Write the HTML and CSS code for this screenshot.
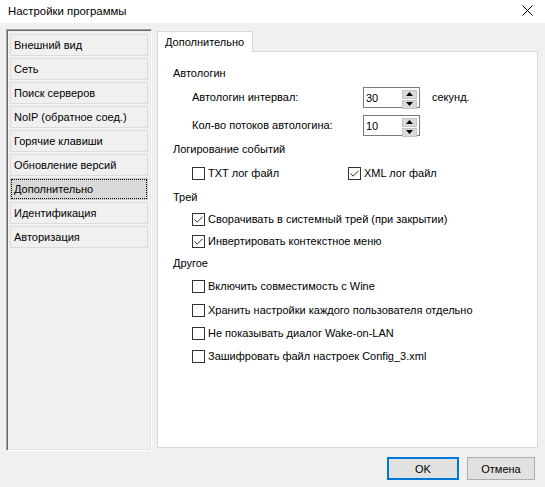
FILE: index.html
```html
<!DOCTYPE html>
<html lang="ru">
<head>
<meta charset="utf-8">
<title>Настройки программы</title>
<link rel="stylesheet" href="styles.css">
</head>
<body>
<div class="window">
  <div class="titlebar">
    <span class="title">Настройки программы</span>
    <svg class="close" width="11" height="11" viewBox="0 0 11 11"><path d="M0.5 0.5 L10.5 10.5 M10.5 0.5 L0.5 10.5" stroke="#000" stroke-width="1" fill="none"/></svg>
  </div>
  <div class="content">
    <div class="sidebar">
      <div class="nav-item">Внешний вид</div>
      <div class="nav-item">Сеть</div>
      <div class="nav-item">Поиск серверов</div>
      <div class="nav-item">NoIP (обратное соед.)</div>
      <div class="nav-item">Горячие клавиши</div>
      <div class="nav-item">Обновление версий</div>
      <div class="nav-item selected">Дополнительно</div>
      <div class="nav-item">Идентификация</div>
      <div class="nav-item">Авторизация</div>
    </div>
    <div class="tabs">
      <div class="tab-strip"><div class="tab">Дополнительно</div></div>
      <div class="tab-panel">
        <div class="row group">Автологин</div>
        <div class="row sub gap2">
          <span class="field-label">Автологин интервал:</span>
          <span class="spin"><span class="spin-val">30</span><span class="spin-btns"><span class="spin-btn"><svg width="7" height="4" viewBox="0 0 7 4"><path d="M0 4 L3.5 0 L7 4 Z" fill="#000"/></svg></span><span class="spin-btn"><svg width="7" height="4" viewBox="0 0 7 4"><path d="M0 0 L7 0 L3.5 4 Z" fill="#000"/></svg></span></span></span>
          <span class="unit">секунд.</span>
        </div>
        <div class="row sub gap6">
          <span class="field-label">Кол-во потоков автологина:</span>
          <span class="spin"><span class="spin-val">10</span><span class="spin-btns"><span class="spin-btn"><svg width="7" height="4" viewBox="0 0 7 4"><path d="M0 4 L3.5 0 L7 4 Z" fill="#000"/></svg></span><span class="spin-btn"><svg width="7" height="4" viewBox="0 0 7 4"><path d="M0 0 L7 0 L3.5 4 Z" fill="#000"/></svg></span></span></span>
        </div>
        <div class="row group gap2">Логирование событий</div>
        <div class="row sub gap2">
          <label class="check first-col"><span class="box"></span>TXT лог файл</label>
          <label class="check"><span class="box"><svg width="11" height="11" viewBox="0 0 11 11"><path d="M1.5 5.5 L4.2 8.2 L9.5 2.8" stroke="#333" stroke-width="1" fill="none"/></svg></span>XML лог файл</label>
        </div>
        <div class="row group gap2">Трей</div>
        <div class="row sub">
          <label class="check"><span class="box"><svg width="11" height="11" viewBox="0 0 11 11"><path d="M1.5 5.5 L4.2 8.2 L9.5 2.8" stroke="#333" stroke-width="1" fill="none"/></svg></span>Сворачивать в системный трей (при закрытии)</label>
        </div>
        <div class="row sub">
          <label class="check"><span class="box"><svg width="11" height="11" viewBox="0 0 11 11"><path d="M1.5 5.5 L4.2 8.2 L9.5 2.8" stroke="#333" stroke-width="1" fill="none"/></svg></span>Инвертировать контекстное меню</label>
        </div>
        <div class="row group">Другое</div>
        <div class="row sub gap1">
          <label class="check"><span class="box"></span>Включить совместимость с Wine</label>
        </div>
        <div class="row sub gap2">
          <label class="check"><span class="box"></span>Хранить настройки каждого пользователя отдельно</label>
        </div>
        <div class="row sub gap1">
          <label class="check"><span class="box"></span>Не показывать диалог Wake-on-LAN</label>
        </div>
        <div class="row sub gap1">
          <label class="check"><span class="box"></span>Зашифровать файл настроек Config_3.xml</label>
        </div>
      </div>
    </div>
  </div>
  <div class="footer">
    <button class="btn btn-default">OK</button>
    <button class="btn btn-cancel">Отмена</button>
  </div>
</div>
</body>
</html>
```
FILE: styles.css
```css
html, body {
  margin: 0;
  padding: 0;
}
body {
  background: #f0f0f0;
  font-family: "Liberation Sans", Arial, sans-serif;
  font-size: 11px;
  color: #000;
}
.window {
  width: 545px;
  height: 487px;
  display: flex;
  flex-direction: column;
}
.titlebar {
  height: 23px;
  background: #fff;
  display: flex;
  align-items: center;
  justify-content: space-between;
  padding: 0 12px 2px 8px;
  box-sizing: border-box;
}
.title {
  font-size: 11.4px;
}
.close {
  display: block;
}
.content {
  display: flex;
  padding: 6px 0 0 6px;
}
.sidebar {
  width: 146px;
  height: 422px;
  box-sizing: border-box;
  border-top: 1px solid #a0a0a0;
  border-left: 1px solid #a0a0a0;
  border-right: 1px solid #fff;
  border-bottom: 1px solid #fff;
  box-shadow: inset 1px 1px 0 #696969, inset -1px -1px 0 #e3e3e3;
  padding: 4px 3px 0 3px;
  display: flex;
  flex-direction: column;
  gap: 2px;
}
.nav-item {
  height: 22px;
  box-sizing: border-box;
  border: 1px solid #dcdcdc;
  line-height: 20px;
  padding-left: 3px;
  white-space: nowrap;
}
.nav-item.selected {
  background: #d9d9d9;
  border-color: #c8c8c8;
  outline: 1px dotted #000;
  outline-offset: -2px;
}
.tabs {
  margin-left: 5px;
  width: 381px;
  display: flex;
  flex-direction: column;
}
.tab-strip {
  margin-top: 2px;
  display: flex;
}
.tab {
  position: relative;
  z-index: 1;
  width: 96px;
  height: 21px;
  box-sizing: border-box;
  background: #fff;
  border: 1px solid #d9d9d9;
  border-bottom: none;
  margin-bottom: -1px;
  padding-left: 7px;
  line-height: 20px;
}
.tab-panel {
  height: 397px;
  box-sizing: border-box;
  background: #fff;
  border: 1px solid #d9d9d9;
  padding: 10px 0 0 15px;
  display: flex;
  flex-direction: column;
}
.row {
  height: 22px;
  display: flex;
  align-items: center;
  white-space: nowrap;
}
.row.sub {
  padding-left: 19px;
}
.gap1 { margin-top: 1px; }
.gap2 { margin-top: 2px; }
.gap6 { margin-top: 6px; }
.field-label {
  width: 171px;
}
.spin {
  width: 57px;
  height: 21px;
  box-sizing: border-box;
  border: 1px solid #7a7a7a;
  display: flex;
  justify-content: space-between;
  align-items: flex-start;
  padding: 1px 2px 0 2px;
}
.spin-val {
  line-height: 18px;
}
.spin-btns {
  display: flex;
  flex-direction: column;
  gap: 1px;
  padding-top: 1px;
}
.spin-btn {
  width: 13px;
  height: 7px;
  background: #dadada;
  border: 1px solid #c4c4c4;
  box-sizing: content-box;
  display: flex;
  align-items: center;
  justify-content: center;
}
.spin-btn svg {
  display: block;
}
.unit {
  margin-left: 12px;
}
.check {
  display: flex;
  align-items: center;
}
.check.first-col {
  width: 156px;
}
.box {
  width: 13px;
  height: 13px;
  box-sizing: border-box;
  border: 1px solid #333;
  background: #fff;
  margin-right: 3px;
  display: flex;
  align-items: center;
  justify-content: center;
}
.box svg {
  display: block;
}
.footer {
  display: flex;
  justify-content: flex-end;
  gap: 8px;
  padding: 6px 10px 0 0;
}
.btn {
  height: 23px;
  box-sizing: border-box;
  background: #e1e1e1;
  border: 1px solid #adadad;
  font-family: "Liberation Sans", Arial, sans-serif;
  font-size: 11px;
  color: #000;
  padding: 0;
  margin: 0;
}
.btn-default {
  width: 72px;
  border: 2px solid #0078d7;
}
.btn-cancel {
  width: 68px;
}
```
